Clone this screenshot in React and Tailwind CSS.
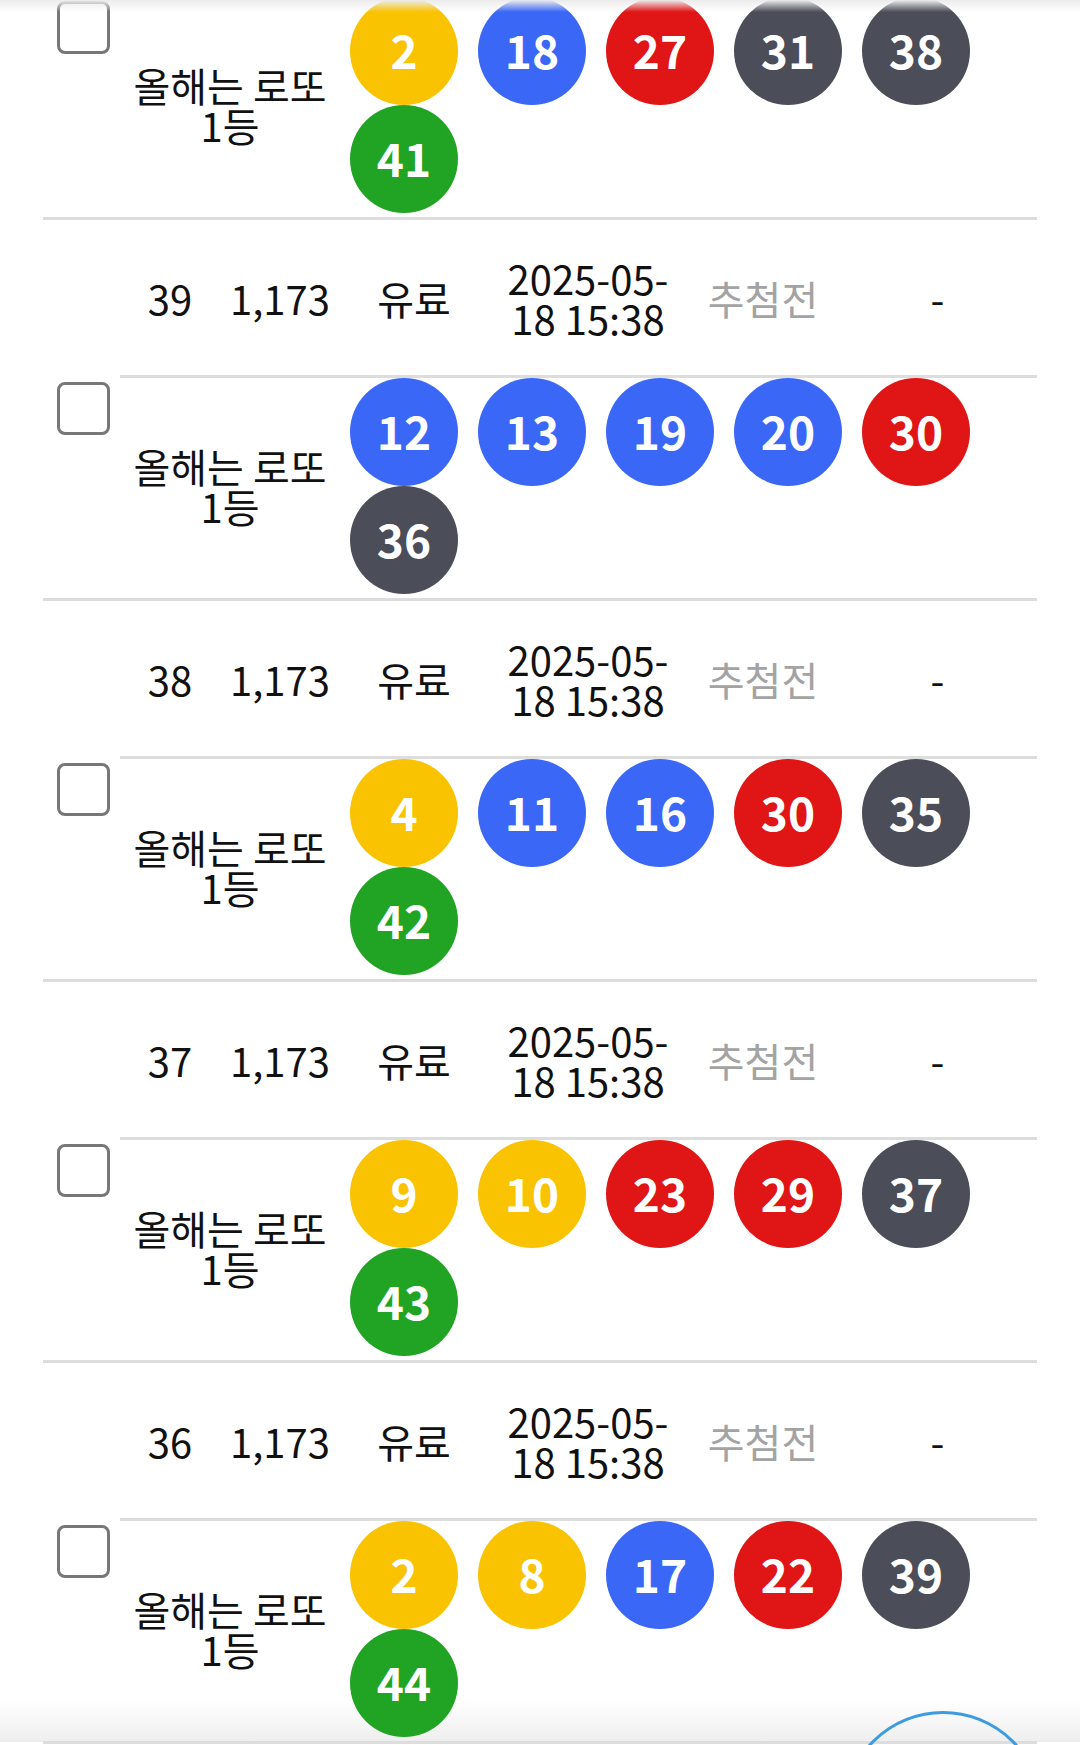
import React from 'react';

const blocks = [
  { id: 39, balls: [12, 13, 19, 20, 30, 36] },
  { id: 38, balls: [4, 11, 16, 30, 35, 42] },
  { id: 37, balls: [9, 10, 23, 29, 37, 43] },
  { id: 36, balls: [2, 8, 17, 22, 39, 44] },
];

const ballColor = (n) => {
  if (n <= 10) return 'bg-[#f9c301]';
  if (n <= 20) return 'bg-[#3a67f6]';
  if (n <= 30) return 'bg-[#e01515]';
  if (n <= 40) return 'bg-[#4b4d58]';
  return 'bg-[#21a324]';
};

const Ball = ({ n }) => (
  <div
    className={`${ballColor(n)} w-[108px] h-[108px] pb-[4px] rounded-full flex items-center justify-center text-white font-bold text-[46px] leading-none`}
  >
    {n}
  </div>
);

const BallRow = ({ balls }) => (
  <div className="flex">
    <div className="w-[77px] pt-[7px] pl-[14px]">
      <div className="w-[53px] h-[53px] rounded-[8px] border-[3px] border-[#777777] bg-white" />
    </div>
    <div className="flex-1 flex border-t-[3px] border-[#dddddd] pb-[4px]">
      <div className="w-[220px] flex items-center justify-center text-center text-[40px] leading-[40px] text-[#111111]">
        <span>
          올해는 로또
          <br />
          1등
        </span>
      </div>
      <div className="flex-1 flex flex-wrap content-start gap-x-[20px] pl-[10px]">
        {balls.map((n, i) => (
          <Ball key={i} n={n} />
        ))}
      </div>
    </div>
  </div>
);

const InfoRow = ({ id }) => (
  <div className="flex h-[155px] items-center text-center text-[40px] leading-[40px] text-[#111111]">
    <div className="w-[77px]" />
    <div className="w-[100px]">{id}</div>
    <div className="w-[120px]">1,173</div>
    <div className="w-[148px]">유료</div>
    <div className="w-[200px] flex justify-center">
      <span className="w-[180px]">2025-05-18 15:38</span>
    </div>
    <div className="w-[150px] text-[#a3a3a3]">추첨전</div>
    <div className="flex-1">-</div>
  </div>
);

export default function App() {
  return (
    <div className="relative w-[1080px] h-[1745px] overflow-hidden bg-white font-['Noto_Sans_CJK_KR','Noto_Sans',sans-serif]">
      {/* bottom nav shadow, behind the list */}
      <div className="absolute left-0 right-0 top-[1700px] h-[42px] bg-gradient-to-b from-transparent to-[#eeeeee]" />

      <div className="relative mx-[43px]">
        <div className="-mt-[6px] border-b-[3px] border-[#dddddd]">
          <BallRow balls={[2, 18, 27, 31, 38, 41]} />
        </div>
        {blocks.map((b) => (
          <div key={b.id} className="border-b-[3px] border-[#dddddd]">
            <InfoRow id={b.id} />
            <BallRow balls={b.balls} />
          </div>
        ))}
      </div>

      {/* header shadow */}
      <div className="absolute top-0 left-0 right-0 h-[12px] bg-gradient-to-b from-[#ececec] to-transparent" />
      {/* floating button */}
      <div className="absolute left-[843px] top-[1711px] w-[200px] h-[200px] rounded-full border-[3px] border-[#3d9be0]" />
    </div>
  );
}
